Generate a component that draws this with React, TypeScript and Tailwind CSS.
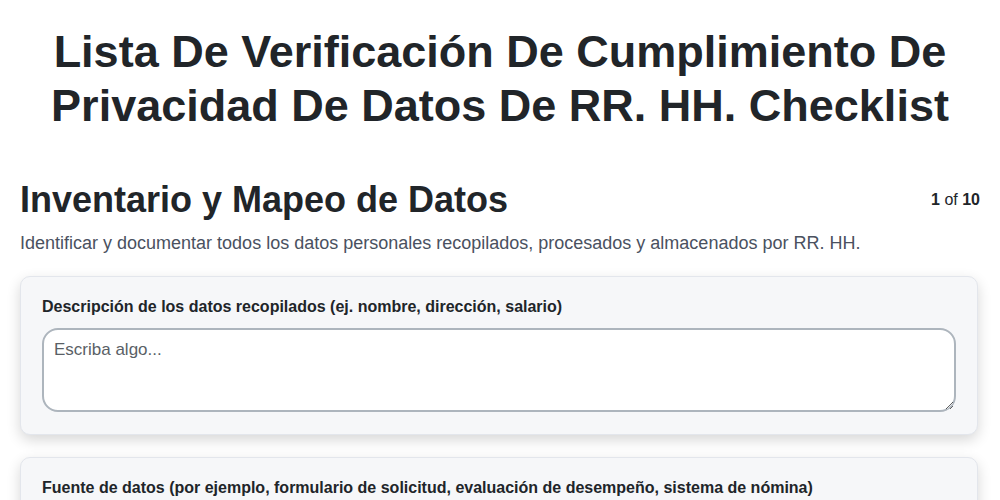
import React from "react";

const font = { fontFamily: '"Liberation Sans", Arial, sans-serif' };

function Field({ label }: { label: string }) {
  return (
    <div className="mb-[22px] rounded-[10px] border border-[#e3e6ec] bg-[#f6f7f9] px-[21px] pt-[20px] pb-[22px] shadow-[0_5px_14px_rgba(0,0,0,0.16)]">
      <div className="mb-[11px] text-[16px] font-bold leading-[20px] text-[#212529]">{label}</div>
      <textarea
        placeholder="Escriba algo..."
        className="block h-[84px] w-full resize-y rounded-[16px] border-2 border-[#adb5bd] bg-white px-[10px] py-[8px] text-[17px] leading-[24px] text-[#212529] placeholder:text-[#5a5f66] outline-none"
        style={font}
      />
    </div>
  );
}

export default function App() {
  return (
    <div className="min-h-screen bg-white text-[#212529]" style={font}>
      <div className="px-[20px]">
        <h1 className="pt-[25px] text-center text-[45px] font-bold leading-[54px] text-[#212529]">
          Lista De Verificación De Cumplimiento De Privacidad De Datos De RR. HH. Checklist
        </h1>
        <div className="mt-[45px] flex items-start justify-between">
          <h2 className="text-[36px] font-bold leading-[44px] text-[#212529]">Inventario y Mapeo de Datos</h2>
          <div className="pt-[12px] text-[16px] leading-[20px] text-[#212529]">
            <span className="font-bold">1</span> of <span className="font-bold">10</span>
          </div>
        </div>
        <p className="mt-[9px] text-[18px] leading-[24px] text-[#4a5160]">
          Identificar y documentar todos los datos personales recopilados, procesados y almacenados por RR. HH.
        </p>
        <div className="mt-[21px] mr-[2px]">
          <Field label="Descripción de los datos recopilados (ej. nombre, dirección, salario)" />
          <Field label="Fuente de datos (por ejemplo, formulario de solicitud, evaluación de desempeño, sistema de nómina)" />
        </div>
      </div>
    </div>
  );
}
